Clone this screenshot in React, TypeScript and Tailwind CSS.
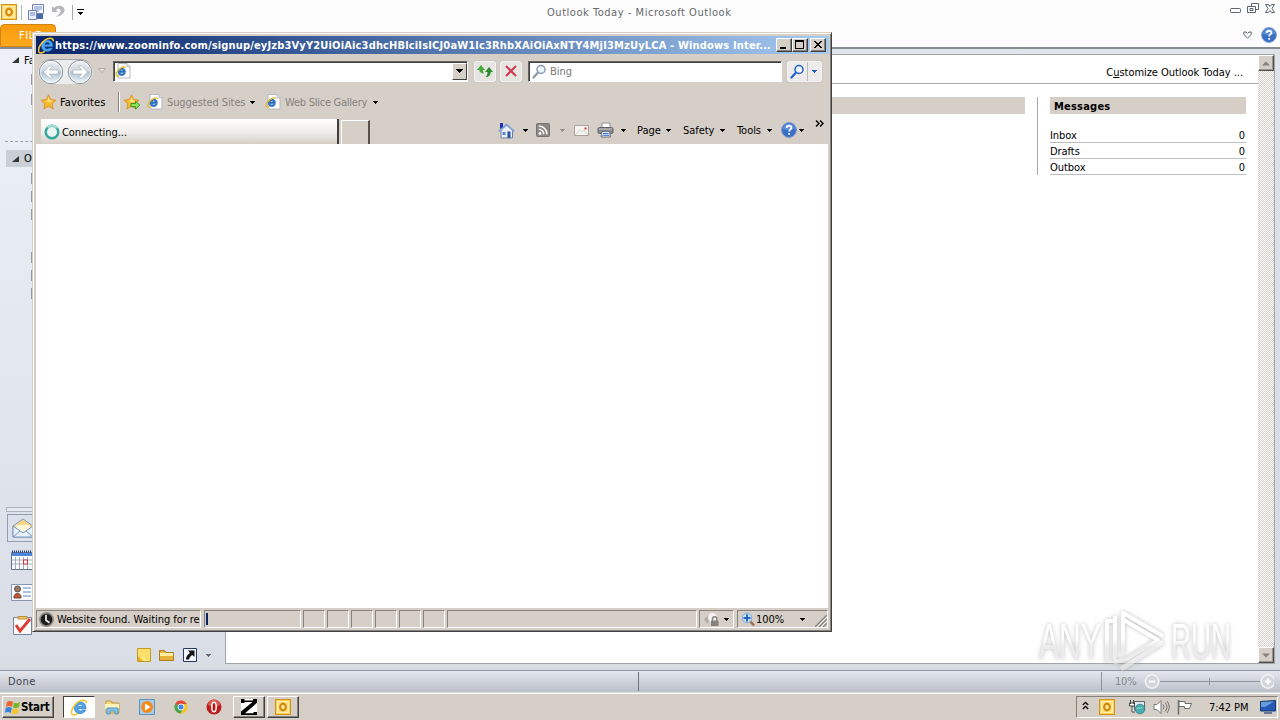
import type { ReactNode } from "react";

const Caret = ({ className = "" }: { className?: string }) => (
  <svg width="5" height="3" viewBox="0 0 5 3" shapeRendering="crispEdges" className={`shrink-0 ${className}`}>
    <path d="M0 0h5v1H0zM1 1h3v1H1zM2 2h1v1H2z" fill="currentColor" />
  </svg>
);

const IeMark = ({ size = 16 }: { size?: number }) => (
  <svg width={size} height={size} viewBox="0 0 16 16" className="shrink-0">
    <path d="M13.8 10.400c-.8 2-2.700 3.400-5.200 3.400A5.400 5.400 0 0 1 3 8.300 5.400 5.400 0 0 1 8.600 2.800c3.600 0 5.700 2.400 5.500 6.400H6.400c.2 1.400 1 2 2.200 2 .9 0 1.500-.3 1.900-.8zM6.500 7h4.300c-.1-1.200-.9-1.800-2.100-1.800S6.700 5.800 6.500 7z" fill="#49a5ee" stroke="#1660b4" strokeWidth=".5" />
    <path d="M14.300 4.200C15 .700 10.500.300 6.500 3 2.500 5.900-.3 11 .7 13.900c.6 1.800 3.300 1.200 5.600-.4" fill="none" stroke="#f4c32c" strokeWidth="1.500" />
  </svg>
);

const IePage = ({ size = 16 }: { size?: number }) => (
  <svg width={size} height={size} viewBox="0 0 16 16" className="shrink-0">
    <path d="M3 .5h9l3 3V15H3z" fill="#fff" stroke="#b4b7bc" />
    <path d="M12 .5v3.200h3" fill="#e6ebf2" stroke="#b4b7bc" />
    <path d="M10.300 10.300c-.6 1.500-1.900 2.300-3.500 2.300-2 0-3.700-1.500-3.700-3.700s1.600-3.800 3.800-3.800c2.300 0 3.700 1.700 3.600 4.300H5.300c.1 1 .7 1.500 1.600 1.500.6 0 1-.2 1.300-.6zM5.300 8h3c-.1-.9-.6-1.300-1.400-1.300S5.500 7.100 5.300 8z" fill="#2379cf" stroke="#154f98" strokeWidth=".5" />
    <path d="M10.500 5C10.400 3.200 7.500 3.800 5 5.700 2 8 .500 11 1.300 12.500c.4.900 2 .6 3.200-.1" fill="none" stroke="#e9b526" strokeWidth="1.200" />
  </svg>
);

const Star = ({ add = false }: { add?: boolean }) => (
  <svg width="17" height="16" viewBox="0 0 17 16" className="shrink-0">
    <path d="M7.500 .8l2.200 4.800 5.300.6-3.900 3.500 1.100 5.200-4.700-2.700-4.700 2.700 1.100-5.200L0 6.200l5.300-.6z" fill="#fbb92e" stroke="#d98a16" strokeWidth=".8" />
    <path d="M7.500 3l1.300 3.500 3.700.4-3.800 1.300-4.200-.8 2-.8z" fill="#ffe58c" />
    {add && <path d="M7 9.500h4.500V7.200l4.300 3.900-4.300 3.900v-2.300H7z" fill="#8fe05a" stroke="#2a9420" strokeWidth=".9" />}
  </svg>
);

const OutlookMark = () => (
  <svg width="16" height="16" viewBox="0 0 16 16" className="shrink-0">
    <rect x=".5" y=".5" width="15" height="15" fill="#fdd04e" stroke="#d89018" />
    <rect x="2.500" y="2.500" width="11" height="11" fill="#ffe285" stroke="#fff0b8" />
    <ellipse cx="8" cy="8" rx="2.800" ry="3.400" fill="#ffe9a0" stroke="#d38909" strokeWidth="2.200" />
  </svg>
);

const HelpBall = ({ size = 16 }: { size?: number }) => (
  <svg width={size} height={size} viewBox="0 0 16 16" className="shrink-0">
    <circle cx="8" cy="8" r="7.400" fill="#3a6fc4" stroke="#7d99cb" />
    <path d="M2 7a6 5.500 0 0 1 12 0q-6 2-12 0z" fill="#6b9be4" opacity=".7" />
    <path d="M5.700 6.100c0-3.200 4.800-3 4.700-.3 0 1.600-2.200 1.700-2.200 3.600M8.200 11v1.800" fill="none" stroke="#fff" strokeWidth="1.800" />
  </svg>
);

const RoundArrow = ({ flip = false }: { flip?: boolean }) => (
  <svg width="26" height="26" viewBox="0 0 26 26" className={`shrink-0 ${flip ? "-scale-x-100" : ""}`}>
    <defs>
      <linearGradient id="glass" x1="0" y1="0" x2="0" y2="1">
        <stop offset="0" stopColor="#f0f1f4" />
        <stop offset=".45" stopColor="#cfd6de" />
        <stop offset=".5" stopColor="#aebfcd" />
        <stop offset="1" stopColor="#eefaff" />
      </linearGradient>
    </defs>
    <circle cx="13" cy="13" r="11.700" fill="url(#glass)" stroke="#8a929b" strokeWidth="1" />
    <circle cx="13" cy="13" r="10.500" fill="none" stroke="#fff" opacity=".8" />
    <path d="M5.500 13l6-6h3.300l-3.700 4H20v4h-8.900l3.700 4h-3.300z" fill="#fff" stroke="#a0adb9" strokeWidth=".6" />
  </svg>
);

const Magnifier = ({ color = "#8a98a8" }: { color?: string }) => (
  <svg width="15" height="15" viewBox="0 0 15 15" className="shrink-0">
    <circle cx="9" cy="5.500" r="4" fill="#eef6fd" stroke={color} strokeWidth="1.500" />
    <path d="M6 8.500L1.500 13.500" stroke={color} strokeWidth="2.200" strokeLinecap="round" />
  </svg>
);

const Sunken = ({ className = "", children }: { className?: string; children?: ReactNode }) => (
  <div className={`flex h-[18px] shrink-0 items-center overflow-hidden border border-t-[#85817b] border-r-white border-b-white border-l-[#85817b] ${className}`}>
    {children}
  </div>
);

const Caption = ({ children, className = "" }: { children: ReactNode; className?: string }) => (
  <div className={`flex h-[14px] w-4 items-center justify-center border border-t-white border-r-[#404040] border-b-[#404040] border-l-white bg-[#d6cfc7] shadow-[inset_-1px_-1px_#85817b] ${className}`}>
    <svg width="12" height="10" viewBox="0 0 12 10" shapeRendering="crispEdges">{children}</svg>
  </div>
);

function BrowserWindow() {
  return (
    <section className="absolute top-[32px] left-[32px] flex h-[600px] w-[800px] flex-col border border-t-[#d6cfc7] border-r-[#404040] border-b-[#404040] border-l-[#d6cfc7] bg-[#d6cfc7] pt-[3px] pr-[2px] pb-[2px] pl-[3px] shadow-[inset_1px_1px_#fff,inset_-1px_-1px_#85817b]">
      <header className="flex h-[18px] shrink-0 items-center bg-linear-to-r from-[#0a246a] to-[#a6caf0] pl-[2px]">
        <IeMark size={17} />
        <h1 className="w-[721px] shrink-0 overflow-hidden text-[11px] font-bold tracking-[0.16px] whitespace-nowrap text-white">
          https://www.zoominfo.com/signup/eyJzb3VyY2UiOiAic3dhcHBlciIsICJ0aW1lc3RhbXAiOiAxNTY4MjI3MzUyLCA - Windows Inter...
        </h1>
        <Caption><path d="M2 7h6v2H2z" /></Caption>
        <Caption><path d="M1 0h9v9H1zM2 2v6h7V2z" fillRule="evenodd" /></Caption>
        <Caption className="ml-[2px]"><path d="M2 1h2v1h1v1h2V2h1V1h2v1H9v1H8v1H7v1h1v1h1v1h1v1H8V7H7V6H5v1H4v1H2V7h1V6h1V5h1V4H4V3H3V2H2z" /></Caption>
      </header>

      <div className="flex h-[34px] shrink-0 items-center pl-[2px]">
        <div className="flex h-[25px] w-[55px] items-center justify-between rounded-full border-t border-[#a5a5a8] bg-[#eceded]">
          <RoundArrow />
          <RoundArrow flip />
        </div>
        <svg width="8" height="6" viewBox="0 0 8 6" className="ml-[5px]"><path d="M.5.500h7L4 4.500z" fill="#e5e1dc" stroke="#aaa59f" strokeWidth=".8" /></svg>
        <div className="ml-[7px] flex h-[21px] w-[355px] items-center justify-between border border-t-[#68645f] border-r-white border-b-white border-l-[#68645f] bg-white pl-px shadow-[inset_1px_1px_#404040]">
          <IePage size={16} />
          <div className="flex h-[17px] w-[15px] items-center justify-center border border-t-white border-r-[#404040] border-b-[#404040] border-l-white bg-[#d6cfc7]">
            <svg width="7" height="4" shapeRendering="crispEdges"><path d="M0 0h7v1H0zM1 1h5v1H1zM2 2h3v1H2zM3 3h1v1H3z" /></svg>
          </div>
        </div>
        <div className="ml-[6px] flex h-[21px] w-[22px] items-center justify-center rounded-[2px] border border-[#f5f4f2] bg-[#e7e5e2] shadow-[0_0_1px_#8d9298]">
          <svg width="16" height="14" viewBox="0 0 16 14"><path d="M0 6l4-5 4 5H5.800c0 1.500.5 2.500 1.500 3.500C4 9.500 2.300 8 2.300 6z" fill="#47ab3c" /><path d="M8 8l4-5 4 5h-2.300c0 3-2 5-5 5 1.500-1.500 1.800-3 1.800-5z" fill="#288d2d" /></svg>
        </div>
        <div className="ml-[4px] flex h-[21px] w-[22px] items-center justify-center rounded-[2px] border border-[#f5f4f2] bg-[#e7e5e2] shadow-[0_0_1px_#8d9298]">
          <svg width="12" height="12" viewBox="0 0 12 12"><path d="M1 1l10 10M11 1L1 11" stroke="#d0384d" strokeWidth="2" /></svg>
        </div>
        <div className="ml-[6px] flex h-[21px] w-[254px] items-center border border-t-[#68645f] border-r-white border-b-white border-l-[#68645f] bg-white pl-[3px] text-[#777] shadow-[inset_1px_1px_#404040]">
          <Magnifier />
          <span className="ml-[3px] pt-px">Bing</span>
        </div>
        <div className="ml-[5px] flex h-[21px] w-[35px] items-stretch rounded-[2px] border border-[#f5f4f2] bg-[#eeecea] shadow-[0_0_1px_#8d9298]">
          <div className="flex w-[20px] items-center justify-center border-r border-[#b9bdc3]"><Magnifier color="#245fd0" /></div>
          <div className="flex flex-1 items-center justify-center text-[#2861c4]"><Caret /></div>
        </div>
      </div>

      <div className="flex h-[28px] shrink-0 items-center pl-[5px]">
        <Star />
        <span className="ml-[2px] w-[58px] tracking-[0.1px]">Favorites</span>
        <div className="h-5 w-[2px] border-l border-[#85817b] bg-white" />
        <div className="ml-[4px]"><Star add /></div>
        <div className="ml-[6px]"><IePage /></div>
        <span className="ml-[4px] w-[83px] pt-px tracking-[-0.1px] text-[#86827d]">Suggested Sites</span>
        <Caret />
        <div className="ml-[10px]"><IePage /></div>
        <span className="ml-[4px] w-[88px] pt-px tracking-[-0.25px] text-[#86827d]">Web Slice Gallery</span>
        <Caret />
      </div>

      <div className="flex h-[28px] shrink-0 pl-[5px]">
        <div className="mt-[3px] flex h-[25px] w-[298px] items-center border-r-2 border-r-[#404040] bg-linear-to-b from-white via-[#f1efed] to-[#d6cfc7] pl-[3px]">
          <svg width="16" height="16" viewBox="0 0 16 16">
            <circle cx="8" cy="8" r="6.300" fill="#eaf5f4" stroke="#35a99e" strokeWidth="2.500" />
            <path d="M3.500 3.500A6.300 6.300 0 0 1 13 4" fill="none" stroke="#a4dcd7" strokeWidth="2.300" />
          </svg>
          <span className="ml-[2px] pt-px">Connecting...</span>
        </div>
        <div className="mt-[4px] ml-[2px] h-[24px] w-[29px] border border-t-white border-r-2 border-r-[#55514d] border-b-0 border-l-white" />
        <div className="ml-[128px] flex items-center">
          <svg width="17" height="17" viewBox="0 0 17 17">
            <path d="M3 8v8h11.500V8L8.500 3z" fill="#e9eff9" stroke="#6d83ab" />
            <path d="M.8 9.500L8.500 2.500l7.700 7" fill="none" stroke="#86a0cf" strokeWidth="1.700" />
            <path d="M2 1h3v4L2 7z" fill="#2034b0" /><path d="M4.500 10h3v3h-3z" fill="#5f86cc" /><path d="M9.500 9.500h3V16h-3z" fill="#27509e" />
          </svg>
          <Caret className="ml-[8px]" />
          <svg width="14" height="14" viewBox="0 0 14 14" className="ml-[8px]">
            <rect x=".5" y=".5" width="13" height="13" rx="1" fill="#8c8985" stroke="#777470" />
            <circle cx="4" cy="10.500" r="1.400" fill="#fff" /><path d="M2.800 6.300a5 5 0 0 1 5 5M2.800 3a8.200 8.200 0 0 1 8.200 8.300" fill="none" stroke="#fff" strokeWidth="1.500" />
          </svg>
          <Caret className="ml-[10px] text-[#96918a]" />
          <svg width="15" height="11" viewBox="0 0 15 11" className="ml-[9px]">
            <path d="M.5.500h14v10H.5z" fill="#f5f4f2" stroke="#a8a39d" /><path d="M1 10l4.500-5 2 1.500 2-1.500 4.500 5" fill="none" stroke="#d9d5d0" /><path d="M10.500 2.500h2v2h-2z" fill="#cf3838" />
          </svg>
          <svg width="18" height="16" viewBox="0 0 18 16" className="ml-[8px]">
            <path d="M5 1h8v5H5z" fill="#fff" stroke="#8b8e92" /><rect x="1" y="5.500" width="15" height="6" rx="1.500" fill="#85888c" stroke="#606367" />
            <path d="M2 7h13" stroke="#c8cbce" /><path d="M5 9.500h7.500l1 5.500H4z" fill="#e2f0ff" stroke="#72767a" /><path d="M6 11.500h5.500M5.500 13.300h7" stroke="#3970c2" />
          </svg>
          <Caret className="ml-[6px]" />
          <span className="ml-[11px] w-[29px]">Page</span><Caret />
          <span className="ml-[12px] w-[37px]">Safety</span><Caret />
          <span className="ml-[12px] w-[30px]">Tools</span><Caret />
          <div className="ml-[9px]"><HelpBall size={16} /></div>
          <Caret className="ml-[2px]" />
          <svg width="9" height="7" viewBox="0 0 9 7" className="mb-[13px] ml-[11px]"><path d="M1 .500l3 3-3 3M5 .500l3 3-3 3" fill="none" stroke="#000" strokeWidth="1.400" /></svg>
        </div>
      </div>

      <main className="mr-px h-[464px] shrink-0 bg-white" />

      <footer className="flex flex-1 items-start pt-[2px]">
        <Sunken className="w-[165px] pl-[2px]">
          <svg width="15" height="15" viewBox="0 0 15 15" className="shrink-0"><circle cx="7.500" cy="7.500" r="6.600" fill="#1e1e1e" stroke="#8b8884" strokeWidth="1.600" /><path d="M7 2.800v5.400l3.500 2.500" fill="none" stroke="#e8e8e8" strokeWidth="1.800" /></svg>
          <span className="ml-[3px]">Website found. Waiting for re</span>
        </Sunken>
        <Sunken className="ml-[3px] w-[97px]"><div className="h-3 w-[3px] border-r-2 border-[#0a246a]" /></Sunken>
        {[0, 1, 2, 3, 4, 5].map((n) => <Sunken key={n} className="ml-[2px] w-[22px]" />)}
        <Sunken className="ml-[2px] w-[250px]" />
        <Sunken className="ml-[2px] w-[35px] pl-[4px]">
          <svg width="16" height="15" viewBox="0 0 16 15"><path d="M0 7l6-5 2 3-5 7z" fill="#b2afab" /><circle cx="8.500" cy="5.500" r="4.500" fill="#f4f2f0" /><path d="M8.500 9V7a2.200 2.200 0 0 1 4.400 0v2" fill="none" stroke="#85827d" strokeWidth="1.400" /><path d="M7 8.500h7.500V14H7z" fill="#85827d" /></svg>
          <Caret className="ml-[4px]" />
        </Sunken>
        <Sunken className="ml-[3px] w-[91px] pl-[3px]">
          <svg width="15" height="15" viewBox="0 0 15 15"><path d="M8.500 8.500l4.500 5" stroke="#9b7047" strokeWidth="2.500" /><circle cx="6" cy="6" r="4.800" fill="#c5e1fb" stroke="#84a9d2" /><path d="M6 2.500v7M2.500 6h7" stroke="#2465bd" strokeWidth="2" /></svg>
          <span className="w-[44px]">100%</span>
          <Caret />
          <svg width="12" height="12" viewBox="0 0 12 12" className="ml-auto self-end"><path d="M0 12L12 0M4 12l8-8M8 12l4-4" stroke="#85817b" strokeWidth="1.300" /><path d="M2 12L12 2M6 12l6-6" stroke="#fff" /></svg>
        </Sunken>
      </footer>
    </section>
  );
}

function NavPane() {
  return (
    <nav className="flex w-[225px] shrink-0 flex-col overflow-hidden bg-linear-to-b from-[#edf1f7] to-[#d9dde6]">
      <div className="flex h-[20px] shrink-0 items-center pt-[2px] pl-[11px]"><svg width="8" height="8"><path d="M8 1v6H1z" fill="#333" /></svg><span className="ml-[5px]">Favorites</span></div>
      <div className="ml-[31px] flex h-[72px] w-1 shrink-0 flex-col gap-[9px] pt-[5px]"><i className="h-[11px] w-1 bg-[#989aa0]" /><i className="h-[11px] w-1 bg-[#989aa0]" /></div>
      <div className="ml-[5px] h-[9px] shrink-0 border-t border-dashed border-[#9ca2ac]" />
      <div className="ml-[6px] flex h-[17px] shrink-0 items-center bg-[#cbcfd7] pl-[5px]"><svg width="8" height="8"><path d="M8 1v6H1z" fill="#333" /></svg><span className="ml-[5px]">Outlook</span></div>
      <div className="ml-[31px] flex h-[340px] w-1 shrink-0 flex-col gap-[7px] pt-[6px]">
        {[0, 1, 2].map((n) => <i key={n} className="h-[11px] w-1 bg-[#989aa0]" />)}
        <i className="mt-[25px] h-[11px] w-1 bg-[#989aa0]" />
        {[0, 1].map((n) => <i key={n} className="h-[11px] w-1 bg-[#989aa0]" />)}
      </div>
      <div className="ml-[6px] h-[5px] shrink-0 border border-[#adb4c0] bg-[#e7ebf1]" />
      <div className="mt-[2px] ml-[7px] flex h-[28px] shrink-0 items-center border border-[#949dad] bg-[#dce2eb] pl-[4px]">
        <svg width="22" height="20" viewBox="0 0 22 20"><path d="M1 8l10-7 10 7v11H1z" fill="#f7d888" stroke="#8498b9" /><path d="M4 7h14v5l-7 4-7-4z" fill="#fff6da" /><path d="M1 8l10 7 10-7v11H1z" fill="#e9f3ff" stroke="#7892bb" /><path d="M1 19l7-6M21 19l-7-6" stroke="#7892bb" /></svg>
      </div>
      <div className="flex h-[34px] shrink-0 items-center pt-px pl-[11px]">
        <svg width="22" height="20" viewBox="0 0 22 20"><path d="M.5 2.500h21v17H.5z" fill="#fff" stroke="#66758f" /><path d="M1 3h20v3H1z" fill="#4e84dc" /><path d="M1 1.500h21" stroke="#1b3d79" strokeWidth="2" strokeDasharray="1 1" /><path d="M4.500 7v12M8.500 7v12M12.500 7v12M16.500 7v12M1 10h20M1 14h20" stroke="#9faac0" /><path d="M12.500 10h4v4h-4z" fill="#fff" stroke="#c33" /></svg>
      </div>
      <div className="flex h-[33px] shrink-0 items-center pl-[11px]">
        <svg width="22" height="17" viewBox="0 0 22 17"><path d="M.5.500h21v16H.5z" fill="#f8fbff" stroke="#8797b1" /><circle cx="6.500" cy="5" r="3" fill="#a0785e" stroke="#555" /><path d="M3 14c-1-6 8-6 7 0z" fill="#c85433" stroke="#6b4c40" /><path d="M12 4h8M12 8h8M12 12h8" stroke="#6788c2" /></svg>
      </div>
      <div className="flex h-[32px] shrink-0 items-center pl-[13px]">
        <svg width="20" height="20" viewBox="0 0 20 20"><path d="M.5 2.500h18v17H.5z" fill="#fff" stroke="#7283a2" /><path d="M5 4V1.500h9V4z" fill="#f4c760" stroke="#b78e3c" /><path d="M3 10l4 6 10-12" fill="none" stroke="#de3d35" strokeWidth="3" /></svg>
      </div>
      <div className="flex h-[23px] shrink-0 items-center pt-[5px] pl-[137px]">
        <svg width="14" height="14" viewBox="0 0 14 14"><path d="M.5.500h13v13H.5z" fill="#fbe06c" stroke="#c69a20" /><path d="M1 8l5 5H1z" fill="#e8ad20" /><path d="M5 9l4 4" stroke="#fff3ae" /></svg>
        <svg width="15" height="12" viewBox="0 0 15 12" className="ml-[8px]"><path d="M.5 1.500h5l1.500 2h7.500v8H.5z" fill="#e9b03a" stroke="#a97d25" /><path d="M1 5.500h13" stroke="#fff0a0" strokeWidth="3" /></svg>
        <svg width="14" height="14" viewBox="0 0 14 14" className="ml-[9px]"><path d="M.5.500h13v13H.5z" fill="#f2f6ff" stroke="#233861" /><path d="M5 2.500h6.500V9L9.300 7C7.500 8 6.500 9 6 11.500H3C3 8.500 4.500 6.500 7 5z" fill="#111" /></svg>
        <Caret className="ml-[9px] text-[#64687a]" />
      </div>
    </nav>
  );
}

const ScrollButton = ({ down = false }: { down?: boolean }) => (
  <div className="flex h-4 w-4 items-center justify-center border border-t-white border-r-[#55514d] border-b-[#55514d] border-l-white bg-[#d6cfc7] shadow-[inset_-1px_-1px_#9a958f]">
    <svg width="8" height="5" viewBox="0 0 8 5" className={down ? "-scale-y-100" : ""}><path d="M0 4.500L4 .500l4 4z" fill="#85817b" /></svg>
  </div>
);

function OutlookWindow() {
  return (
    <section className="flex h-[693px] flex-col bg-[#fcfcfd]">
      <header className="flex h-6 shrink-0 items-center pl-px">
        <OutlookMark />
        <div className="ml-[4px] h-[15px] w-px bg-[#b5b7bb]" />
        <svg width="16" height="16" viewBox="0 0 16 16" className="mb-px ml-[6px]">
          <path d="M4.500.500h11v9h-11z" fill="#f4f7ff" stroke="#7583ac" /><path d="M6 3h8M6 5h8M6 7h5" stroke="#7890c6" /><path d="M.5 6.500h8v9h-8z" fill="#e7edfa" stroke="#7583ac" /><path d="M2 9h5M2 11h5" stroke="#7890c6" /><path d="M9 10h6v5H9z" fill="#4668ad" />
        </svg>
        <svg width="13" height="13" viewBox="0 0 13 13" className="mb-px ml-[8px]"><path d="M0 1v6h6L4 5.300c2-2.600 5-1.500 4.500 1.200C8 8.500 6 10 4 12c4-1 8-3 8.500-6.500C13 1 6-1 2.200 3z" fill="#b6b7ba" /></svg>
        <div className="ml-[7px] h-[15px] w-px bg-[#a9abaf]" />
        <svg width="7" height="6" className="ml-[4px]" shapeRendering="crispEdges"><path d="M0 0h7v1H0zM1 3h5v1H1zM2 4h3v1H2zM3 5h1v1H3z" /></svg>
        <h2 className="ml-[463px] w-[683px] text-[11px] tracking-[0.54px] text-[#66686c]">Outlook Today - Microsoft Outlook</h2>
        <svg width="46" height="12" viewBox="0 0 46 12" fill="none" stroke="#5c6570" className="mb-[6px]">
          <rect x=".5" y="5.500" width="10" height="4" rx=".8" /><path d="M21.500 3.500V.500h7v6h-3M17.500 3.500h8v6h-8zM20 5.500h3v2h-3z" />
          <path d="M35.500 1.500h3l1.500 2 1.500-2h3L42 5.500l2.500 4h-3L40 7.500l-1.500 2h-3L38 5.500z" />
        </svg>
      </header>
      <div className="flex h-[23px] shrink-0 items-start justify-between">
        <div className="flex h-[23px] w-[56px] items-center rounded-t-sm border border-[#d18414] bg-linear-to-b from-[#f79b0c] to-[#ffa91c] pl-[18px] tracking-[0.6px] text-white">FILE</div>
        <div className="mt-[3px] mr-[3px] flex items-center gap-[9px]">
          <svg width="9" height="8" viewBox="0 0 9 8"><path d="M4.500 7L.8 3.500V1H3l1.500 1.500L6 1h2.200v2.500z" fill="#fff" stroke="#596270" /></svg>
          <HelpBall size={16} />
        </div>
      </div>
      <div className="flex h-[617px] shrink-0 border-t-2 border-[#878c92] bg-linear-to-b from-[#dfe4eb] to-[#d3dae1]">
        <NavPane />
        <div className="mt-[5px] flex h-[610px] w-[1050px] border border-[#a0a5ab] bg-white">
          <div className="flex flex-1 flex-col">
            <div className="flex h-[29px] items-center justify-end border-b border-[#aaa] pt-[6px] pr-[15px]"><span className="tracking-[-0.04px]">C<u>u</u>stomize Outlook Today ...</span></div>
            <div className="flex pt-[13px]">
              <div className="h-[17px] w-[799px] bg-[#d6cfc7]" />
              <div className="ml-[12px] h-[78px] w-px bg-[#aaa]" />
              <div className="ml-[12px] w-[196px]">
                <h3 className="flex h-[17px] items-center bg-[#d6cfc7] pt-px pl-1 text-[11px] font-bold tracking-[0.22px]">Messages</h3>
                <ul className="pt-[13px]">
                  {["Inbox", "Drafts", "Outbox"].map((name) => (
                    <li key={name} className="flex h-4 items-center justify-between border-b border-[#bdbdbd] pt-[2px] pr-px"><span>{name}</span><span>0</span></li>
                  ))}
                </ul>
              </div>
            </div>
          </div>
          <div className="flex w-4 flex-col justify-between bg-[repeating-conic-gradient(#ffffff_0_25%,#d6cfc7_0_50%)] bg-size-[2px_2px]">
            <ScrollButton /><ScrollButton down />
          </div>
        </div>
      </div>
      <div className="h-[6px] shrink-0 bg-[#d5dce2]" />
      <footer className="flex h-[23px] shrink-0 items-center border-t border-b border-t-[#8c929e] border-b-[#dfe1d8] bg-linear-to-b from-[#e4e7ee] to-[#bbbfc8] pl-[8px] text-[#3e4450]">
        <span className="w-[630px] tracking-[0.4px]">Done</span>
        <div className="h-[19px] w-px bg-[#6e7580]" />
        <div className="ml-[462px] h-[19px] w-px bg-[#8e949e]" />
        <span className="ml-[13px] w-[29px] tracking-[-0.2px] text-[#85898f]">10%</span>
        <svg width="130" height="16" viewBox="0 0 130 16" fill="none" stroke="#8f949d">
          <path d="M16 7.500h100M65.500 4v7" /><circle cx="8" cy="7.500" r="6.700" fill="#d3d6dc" stroke="#f1f2f4" strokeWidth="1.500" /><path d="M5 7.500h6" stroke="#fff" strokeWidth="2" />
          <circle cx="124" cy="7.500" r="6.700" fill="#d3d6dc" stroke="#f1f2f4" strokeWidth="1.500" /><path d="M121 7.500h6M124 4.500v6" stroke="#fff" strokeWidth="2" />
        </svg>
      </footer>
    </section>
  );
}

function Taskbar() {
  return (
    <footer className="flex h-[27px] items-center border-t border-white bg-[#d6cfc7] pl-[2px]">
      <button className="flex h-[22px] w-[52px] items-center border border-t-white border-r-[#404040] border-b-[#404040] border-l-white pl-[2px] shadow-[inset_-1px_-1px_#85817b]">
        <svg width="16" height="15" viewBox="0 0 16 15" className="shrink-0"><path d="M2 2q3-2 6 0L7 7Q4 5 1 7z" fill="#ef6330" /><path d="M9 2.500q3 1.500 6-.5l-1 5q-3 2-6 .5z" fill="#76b82a" /><path d="M.8 8q3-2 6 0l-1 5q-3-2-6 0z" fill="#3a83dc" /><path d="M7.800 8.500q3 1.500 6-.5l-1 5q-3 2-6 .5z" fill="#f8c52a" /></svg>
        <span className="pt-px text-[11.500px] font-bold tracking-[-0.2px]">Start</span>
      </button>
      <div className="ml-[9px] flex h-[22px] w-[32px] items-center justify-center border border-t-[#404040] border-r-white border-b-white border-l-[#404040] bg-white"><IeMark size={17} /></div>
      <svg width="17" height="16" viewBox="0 0 17 16" className="ml-[9px]"><path d="M2 2h5l1 2h7v10H2z" fill="#f7da80" stroke="#bc9a46" /><path d="M1 5h14v5H1z" fill="#fff2b9" /><path d="M3 9h11v6h-3v-3H6v3H3z" fill="#7fc3ea" stroke="#5798c1" /></svg>
      <svg width="16" height="16" viewBox="0 0 16 16" className="ml-[18px]"><path d="M.5.500h15v15H.5z" fill="#a7cdea" stroke="#5794c4" /><circle cx="8" cy="8" r="6" fill="#f58b1c" /><path d="M6 4.500L11.500 8 6 11.500z" fill="#fff" /></svg>
      <svg width="14" height="14" viewBox="0 0 16 16" className="ml-[19px]"><circle cx="8" cy="8" r="7.500" fill="#f5c624" /><path d="M8 8L1.500 4.200A7.500 7.500 0 0 1 14.500 4.500H8z" fill="#df4637" /><path d="M8 8L1.500 4.200A7.500 7.500 0 0 0 7.500 15.500L11 9z" fill="#45a352" /><circle cx="8" cy="8" r="3.500" fill="#4385e8" stroke="#fff" /></svg>
      <svg width="16" height="16" viewBox="0 0 16 16" className="ml-[18px]"><circle cx="8" cy="8" r="7.500" fill="#be1c1c" /><path d="M2 6a6 5.500 0 0 1 12 0q-6 3-12 0z" fill="#e67569" opacity=".7" /><ellipse cx="8" cy="8" rx="2.200" ry="4.800" fill="#b91616" stroke="#fff" strokeWidth="1.500" /></svg>
      <div className="ml-[11px] flex h-[22px] w-[32px] items-center justify-center border border-t-white border-r-[#404040] border-b-[#404040] border-l-white shadow-[inset_-1px_-1px_#85817b]">
        <svg width="16" height="16" viewBox="0 0 16 16"><path d="M0 0h16v16H0z" fill="#fff" /><path d="M0 0h3.500v1.500H12V0h4v3.800L4 14.200h8.500V13H16v3H0v-3.500L11.500 3H3.500v1H0z" /></svg>
      </div>
      <div className="ml-[2px] flex h-[22px] w-[32px] items-center justify-center border border-t-white border-r-[#404040] border-b-[#404040] border-l-white shadow-[inset_-1px_-1px_#85817b]"><OutlookMark /></div>
      <div className="mr-[2px] ml-auto flex h-[22px] w-[202px] items-center border border-t-[#85817b] border-r-white border-b-white border-l-[#85817b] pl-[5px]">
        <svg width="7" height="9" viewBox="0 0 7 9" fill="none" stroke="#000" strokeWidth="1.300" className="mb-[3px]"><path d="M.8 4l2.700-2.700L6.200 4M.8 8l2.700-2.700L6.200 8" /></svg>
        <div className="ml-[10px]"><OutlookMark /></div>
        <svg width="17" height="16" viewBox="0 0 17 16" className="ml-[14px]"><path d="M5.500 2.500h10v9h-10z" fill="#e3ebf2" stroke="#59656e" /><path d="M1.500 1v4M4.500 1v4M.5 4h5v3h-5zM3 7v6h3" fill="#fff" stroke="#444" /><circle cx="11" cy="10" r="4.800" fill="#4aadae" stroke="#287a85" strokeWidth=".7" /><path d="M8 10c2-4 3 2 5-2" fill="none" stroke="#a6e5cd" /></svg>
        <svg width="17" height="16" viewBox="0 0 17 16" className="ml-[7px]" fill="none" stroke="#777"><path d="M1 5.500h3l4-4v13l-4-4H1z" fill="#fff" /><path d="M10 5.500q2 2.500 0 5M12 3.500q4 4.500 0 9M14 2q4.500 6 0 12" /></svg>
        <svg width="16" height="16" viewBox="0 0 16 16" className="ml-[7px]" fill="#fff" stroke="#6b6b6b"><path d="M1.500 1v14.500" strokeWidth="1.500" /><path d="M2 2.500h6v2h6.500l-2 5H7.500v-2H2z" /></svg>
        <span className="ml-[16px] w-[51px] tracking-[-0.05px]">7:42 PM</span>
        <svg width="16" height="14" viewBox="0 0 16 14"><path d="M.5 1.500L15.500.500v10.500H.5z" fill="#2359b4" stroke="#17396c" /><path d="M1 2l13-.5L5 7H1z" fill="#659cdf" /><path d="M4 13h8" stroke="#405b88" strokeWidth="1.500" /></svg>
      </div>
    </footer>
  );
}

const Watermark = () => (
  <svg width="220" height="78" viewBox="0 0 220 78" className="absolute top-[602px] left-[1032px] opacity-75 drop-shadow-[0_0_2px_#a8a8a8]">
    <defs>
      <linearGradient id="fade" gradientUnits="userSpaceOnUse" x1="0" y1="20" x2="0" y2="62">
        <stop offset="0.4" stopColor="#ffffff" />
        <stop offset="0.6" stopColor="#e6e6e6" />
      </linearGradient>
    </defs>
    <g fill="url(#fade)" className="font-['Liberation_Sans_Narrow','Liberation_Sans',sans-serif] tracking-normal" fontSize="50">
      <text x="7" y="57" textLength="62" lengthAdjust="spacingAndGlyphs">ANY</text>
      <text x="139" y="57" textLength="60" lengthAdjust="spacingAndGlyphs">RUN</text>
    </g>
    <g fill="none" stroke="url(#fade)" strokeWidth="4" strokeLinejoin="round">
      <path d="M75 60V19h8" />
      <path d="M91 52V11l40 23" />
      <path d="M83 14v46l12-3 31-19-34-20" />
      <path d="M89 67l42-27" strokeWidth="5" />
    </g>
  </svg>
);

export default function App() {
  return (
    <div className="relative h-[720px] w-[1280px] overflow-hidden font-['DejaVu_Sans_Condensed','DejaVu_Sans',sans-serif] text-[11px] leading-none tracking-[-0.05px] whitespace-nowrap text-black [font-stretch:condensed]">
      <OutlookWindow />
      <Taskbar />
      <BrowserWindow />
      <Watermark />
    </div>
  );
}
